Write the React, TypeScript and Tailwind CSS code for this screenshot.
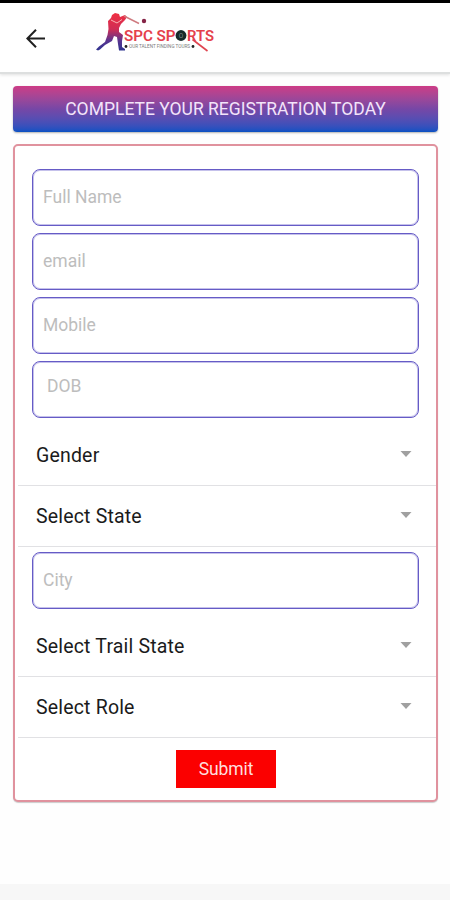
import React from 'react';

const fieldClass =
  'block w-[387px] h-[57px] ml-[17px] rounded-[8px] border border-[#665bc6] shadow-[inset_0_0_0_1px_rgba(110,100,205,0.4)] bg-white text-[17.5px] text-[#333] placeholder:text-[#bdbdbd] outline-none';

const Logo: React.FC = () => (
  <svg width="124" height="42" viewBox="0 0 124 42" className="ml-[48px] mt-[-10px]" aria-label="SPC Sports">
    <defs>
      <linearGradient id="player" gradientUnits="userSpaceOnUse" x1="0" y1="2" x2="0" y2="40">
        <stop offset="0" stopColor="#ee3044" />
        <stop offset="0.4" stopColor="#d02d55" />
        <stop offset="0.7" stopColor="#5a3590" />
        <stop offset="1" stopColor="#27338f" />
      </linearGradient>
    </defs>
    {/* batsman */}
    <path
      d="M18 3 L21 1 L25 2 L26 5 L31 3 L33 5 L31 8 L27 12 L25 16 L25 20 L29 23 L28 29 L28 35 L31 37 L31 38.5 L25 38.5 L24 32 L23 25 L20 24 L18 29 L11 33 L6 37.5 L4 38.5 L2 37.5 L5 34.5 L11 30 L13.5 23 L14.5 17 L14 9 L17 6 Z"
      fill="url(#player)"
    />
    <path d="M17 8 L23 11 L28 7.5" fill="none" stroke="#f9b4b4" strokeWidth="1" />
    <path d="M30 4 L45 11.5" stroke="#cf7b80" strokeWidth="1.5" />
    <circle cx="50" cy="9" r="2.2" fill="#852447" />
    <g
      fontFamily="Roboto, 'Liberation Sans', sans-serif"
      fontSize="15.5"
      fontWeight="600"
      fill="#e5404b"
    >
      <text x="30" y="29" textLength="29" lengthAdjust="spacingAndGlyphs">SPC</text>
      <text x="62.5" y="29" textLength="19" lengthAdjust="spacingAndGlyphs">SP</text>
      <text x="93" y="29" textLength="27" lengthAdjust="spacingAndGlyphs">RTS</text>
    </g>
    <circle cx="87" cy="23.5" r="5.4" fill="#172b2a" />
    <text x="87" y="25.9" textAnchor="middle" fontFamily="Roboto, sans-serif" fontSize="6.5" fill="#7d8a89">O</text>
    <path d="M98.5 27.5 L113.5 39" stroke="#df4550" strokeWidth="1.6" />
    <circle cx="32" cy="34.5" r="1.4" fill="#222" />
    <circle cx="99" cy="34.5" r="1.4" fill="#222" />
    <text x="35" y="36.4" textLength="61" lengthAdjust="spacingAndGlyphs" fontFamily="Roboto, sans-serif" fontSize="4.6" fill="#7a7a7a">
      OUR TALENT FINDING TOURS
    </text>
  </svg>
);

const SelectRow: React.FC<{ label: string }> = ({ label }) => (
  <button type="button" className="ml-[3px] flex h-[61px] w-[418px] items-center justify-between border-b-[1.5px] border-[#e1e1e4] pl-[18px] pr-[24px] text-left">
    <span className="mt-px text-[19.5px] tracking-[0.18px] text-[#1b1b1b]">{label}</span>
    <svg width="12" height="6" viewBox="0 0 12 6" className="-mt-[3px]">
      <path d="M0.5 0 H11.5 L6 6 Z" fill="#a0a0a0" />
    </svg>
  </button>
);

export default function App() {
  return (
    <div className="flex h-[900px] w-[450px] flex-col overflow-hidden bg-[#fefefe] font-[Roboto,sans-serif]">
      <div className="h-[3px] shrink-0 bg-black" />
      <header className="flex h-[71px] shrink-0 items-center border-b-2 border-[#dddfdf] bg-white pl-[26px] shadow-[0_1px_3px_rgba(0,0,0,0.12)]">
        <button aria-label="Back">
          <svg width="20" height="20" viewBox="0 0 20 20" fill="none" stroke="#202020" strokeWidth="2">
            <path d="M19 10.5 H2 M10 1.7 L1.4 10.5 L10 19.3" />
          </svg>
        </button>
        <Logo />
      </header>

      <div className="ml-[13px] mt-[12px] flex h-[46px] w-[425px] shrink-0 items-center justify-center rounded-[4px] bg-linear-to-b from-[#cd3b86] via-[#7647a6] to-[#0551c3] shadow-[0_1px_2px_rgba(0,0,0,0.3)]">
        <h1 className="whitespace-nowrap text-[17.5px] text-[#f3e4fa]">COMPLETE YOUR REGISTRATION TODAY</h1>
      </div>

      <form
        className="ml-[13px] mt-[12px] h-[658px] w-[425px] shrink-0 rounded-[5px] border-2 border-[#e0929e] bg-white pt-[23px] shadow-[0_1px_1px_rgba(0,0,0,0.2)]"
        onSubmit={(e) => e.preventDefault()}
      >
        <div className="flex flex-col gap-[7px]">
          <input className={`${fieldClass} px-[10px] pb-px`} placeholder="Full Name" />
          <input className={`${fieldClass} px-[10px] pb-px`} placeholder="email" />
          <input className={`${fieldClass} px-[10px] pb-px`} placeholder="Mobile" />
          <input className={`${fieldClass} px-[14px] pb-[8px]`} placeholder="DOB" />
        </div>
        <div className="mt-[7px]">
          <SelectRow label="Gender" />
          <SelectRow label="Select State" />
        </div>
        <input className={`${fieldClass} mt-[5px] px-[10px] pb-px`} placeholder="City" />
        <div className="mt-[7px]">
          <SelectRow label="Select Trail State" />
          <SelectRow label="Select Role" />
        </div>
        <button type="submit" className="ml-[161px] mt-[12px] flex h-[38px] w-[100px] items-center justify-center bg-[#fb0000] text-[17.5px] text-[#ffdede]">
          <span className="tracking-[-0.1px]">Submit</span>
        </button>
      </form>

      <div className="mt-auto h-[16px] shrink-0 bg-[#f7f7f7]" />
    </div>
  );
}
